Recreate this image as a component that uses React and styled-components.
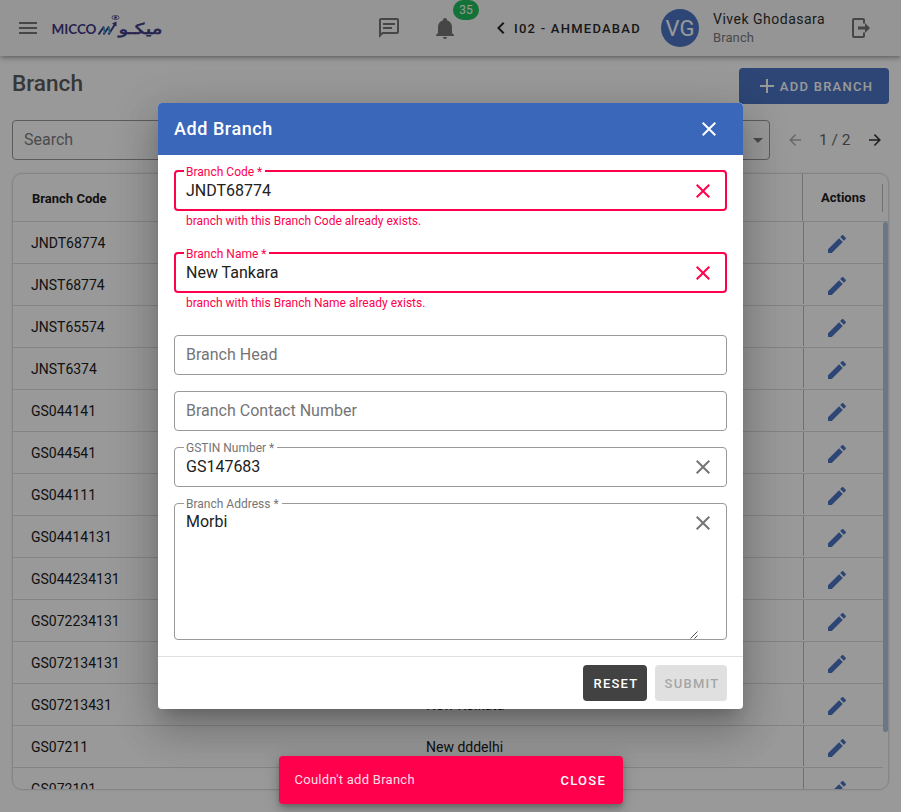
import React from "react";
import styled, { createGlobalStyle, css } from "styled-components";

const GlobalStyle = createGlobalStyle`
  *, *::before, *::after { box-sizing: border-box; }
  html, body { margin: 0; height: 100%; overflow: hidden; }
  body { font-family: Roboto, "Liberation Sans", sans-serif; color: #212121; background: #fff; }
  button { font-family: inherit; border: 0; padding: 0; background: none; color: inherit; }
`;

const PATHS = {
  menu: "M3,6H21V8H3V6M3,11H21V13H3V11M3,16H21V18H3V16Z",
  message:
    "M20,2A2,2 0 0,1 22,4V16A2,2 0 0,1 20,18H6L2,22V4C2,2.89 2.9,2 4,2H20M4,4V17.17L5.17,16H20V4H4M6,7H18V9H6V7M6,11H15V13H6V11Z",
  bell: "M21,19V20H3V19L5,17V11C5,7.9 7.03,5.17 10,4.29C10,4.19 10,4.1 10,4A2,2 0 0,1 12,2A2,2 0 0,1 14,4C14,4.1 14,4.19 14,4.29C16.97,5.17 19,7.9 19,11V17L21,19M14,21A2,2 0 0,1 12,23A2,2 0 0,1 10,21",
  chevronLeft: "M15.41,16.58L10.83,12L15.41,7.41L14,6L8,12L14,18L15.41,16.58Z",
  close:
    "M19,6.41L17.59,5L12,10.59L6.41,5L5,6.41L10.59,12L5,17.59L6.41,19L12,13.41L17.59,19L19,17.59L13.41,12L19,6.41Z",
  plus: "M19,13H13V19H11V13H5V11H11V5H13V11H19V13Z",
  arrowLeft: "M20,11V13H8L13.5,18.5L12.08,19.92L4.16,12L12.08,4.08L13.5,5.5L8,11H20Z",
  arrowRight: "M4,11V13H16L10.5,18.5L11.92,19.92L19.84,12L11.92,4.08L10.5,5.5L16,11H4Z",
  menuDown: "M7,10L12,15L17,10H7Z",
  pencil:
    "M20.71,7.04C21.1,6.65 21.1,6 20.71,5.63L18.37,3.29C18,2.9 17.35,2.9 16.96,3.29L15.12,5.12L18.87,8.87M3,17.25V21H6.75L17.81,9.93L14.06,6.18L3,17.25Z",
  logout:
    "M5,2H14A2,2 0 0,1 16,4V7.5H14V4H5V20H14V16.5H16V20A2,2 0 0,1 14,22H5A2,2 0 0,1 3,20V4A2,2 0 0,1 5,2M16,7L21,12L16,17V13.5H9V10.5H16V7Z",
};

const Svg = styled.svg`
  display: block;
  flex: none;
  width: ${(p) => p.$size}px;
  height: ${(p) => p.$size}px;
  fill: currentColor;
`;

const Icon = ({ name, size = 24 }) => (
  <Svg $size={size} viewBox="0 0 24 24" aria-hidden="true">
    <path d={PATHS[name]} />
  </Svg>
);

const Page = styled.div`
  position: relative;
  height: 812px;
  width: 901px;
  overflow: hidden;
  background: #fff;
`;

const AppBar = styled.header`
  position: relative;
  display: flex;
  align-items: center;
  height: 56px;
  padding-left: 16px;
  background: #f8f8f8;
  color: #757575;
  box-shadow: 0 2px 4px -1px rgba(0, 0, 0, 0.3), 0 4px 5px rgba(0, 0, 0, 0.08),
    0 1px 10px rgba(0, 0, 0, 0.06);
`;

const LogoSvg = styled.svg`
  width: 112px;
  height: 30px;
  margin-left: 12px;
`;

const BarActions = styled.div`
  display: flex;
  align-items: center;
  margin-left: 213px;
`;

const BellWrap = styled.div`
  position: relative;
  margin-left: 32px;
`;

const Badge = styled.span`
  position: absolute;
  left: 20px;
  top: -16px;
  width: 26px;
  height: 20px;
  border-radius: 10px;
  background: #1ebe5c;
  color: #fff;
  font-size: 12px;
  line-height: 20px;
  text-align: center;
`;

const BranchSwitch = styled.button`
  display: flex;
  align-items: center;
  margin-left: 32px;
  width: 152px;
  color: #292929;
  font-size: 13px;
  font-weight: 500;
  letter-spacing: 1.25px;
  white-space: nowrap;
`;

const SwitchLabel = styled.span`
  margin-left: 1px;
`;

const Avatar = styled.div`
  display: grid;
  place-items: center;
  width: 38px;
  height: 38px;
  margin-left: 20px;
  border-radius: 50%;
  background: #4d76c4;
  color: #fff;
  font-size: 22px;
`;

const UserText = styled.div`
  width: 122px;
  margin-left: 14px;
  color: #2f2f2f;
  font-size: 14px;
  line-height: 19px;
  letter-spacing: 0.5px;
`;

const UserRole = styled.div`
  color: #7a7a7a;
  font-size: 13px;
  line-height: 18px;
  letter-spacing: 0.1px;
`;

const LogoutWrap = styled.div`
  margin-left: 14px;
`;

const Content = styled.main`
  padding: 12px 13px 0 12px;
`;

const TitleRow = styled.div`
  display: flex;
  justify-content: space-between;
  height: 52px;
`;

const Title = styled.h1`
  margin: 0;
  color: #5c5c5c;
  font-size: 22.6px;
  font-weight: 500;
  line-height: 31px;
`;

const AddButton = styled.button`
  display: flex;
  align-items: center;
  justify-content: center;
  gap: 1px;
  width: 150px;
  height: 36px;
  margin-right: -1px;
  border-radius: 4px;
  background: #4d76c4;
  color: #fff;
  font-size: 13px;
  font-weight: 500;
  letter-spacing: 1.25px;
`;

const FilterRow = styled.div`
  display: flex;
  align-items: center;
  height: 40px;
`;

const FilterBox = styled.div`
  display: flex;
  align-items: center;
  justify-content: space-between;
  width: ${(p) => p.$width}px;
  height: 40px;
  padding: 0 0 1px 11px;
  margin-right: ${(p) => p.$gap}px;
  border: 1px solid #999;
  border-radius: 4px;
  color: #7e7e7e;
  font-size: 16px;
`;

const DropArrow = styled.span`
  margin-right: -1px;
`;

const Pager = styled.div`
  display: flex;
  align-items: center;
  gap: 15px;
  margin-left: 16px;
  color: #666;
  font-size: 15.5px;
`;

const PagerArrow = styled.span`
  color: ${(p) => (p.$off ? "#b0b0b0" : "#333")};
`;

const Table = styled.section`
  height: 617px;
  margin: 13px -1px 0 0;
  border: 1px solid #dedede;
  border-radius: 10px;
  overflow: hidden;
  box-shadow: 0 0 1px 1px rgba(0, 0, 0, 0.04);
`;

const HeadRow = styled.div`
  display: flex;
  height: 48px;
  border-bottom: 1px solid #ddd;
  font-size: 13px;
  font-weight: 700;
  line-height: 50px;
`;

const HeadCell = styled.div`
  flex: 1;
  padding-left: 19px;
`;

const HeadActions = styled.div`
  display: flex;
  align-items: center;
  justify-content: space-between;
  width: 86px;
  padding: 0 5px 0 18px;
  border-left: 1px solid #bcbcc2;
`;

const Tick = styled.span`
  width: 1px;
  height: 28px;
  margin-top: 1px;
  background: #bcbcc2;
`;

const Body = styled.div`
  display: flex;
  height: 568px;
  overflow: hidden;
`;

const Rows = styled.div`
  flex: 1;
`;

const Row = styled.div`
  display: flex;
  height: 42px;
  border-bottom: 1px solid #ddd;
  font-size: 14px;
  line-height: 42px;
`;

const CodeCell = styled.div`
  width: 395px;
  padding-left: 18px;
`;

const NameCell = styled.div`
  flex: 1;
  padding-left: 18px;
`;

const ActionCell = styled.div`
  display: flex;
  align-items: center;
  width: 80px;
  height: 40px;
  padding: 3px 0 0 21px;
  border-left: 1px solid #bcbcc2;
  color: #4d76c4;
`;

const ScrollThumb = styled.div`
  width: 5px;
  height: 510px;
  border-radius: 4px;
  background: #b0c6e2;
`;

const Scrim = styled.div`
  position: absolute;
  inset: 0;
  background: rgba(0, 0, 0, 0.4);
`;

const Dialog = styled.section`
  position: absolute;
  left: 158px;
  top: 103px;
  display: flex;
  flex-direction: column;
  width: 585px;
  height: 606px;
  border-radius: 4px;
  overflow: hidden;
  background: #fff;
`;

const DialogShadow = styled.div`
  position: absolute;
  left: 158px;
  top: 103px;
  width: 585px;
  height: 606px;
  border-radius: 4px;
  box-shadow: 0 11px 15px -7px rgba(0, 0, 0, 0.2), 0 24px 38px 3px rgba(0, 0, 0, 0.14),
    0 9px 46px 8px rgba(0, 0, 0, 0.12);
`;

const DialogHeader = styled.header`
  display: flex;
  align-items: center;
  justify-content: space-between;
  height: 52px;
  padding: 0 22px 0 16px;
  background: #3a67ba;
  color: #fff;
  font-size: 18px;
  font-weight: 500;
  letter-spacing: 0.55px;
`;

const DialogTitle = styled.span`
  margin-top: -2px;
`;

const DialogBody = styled.div`
  flex: 1;
  padding: 15px 16px 0;
`;

const FieldBox = styled.div`
  position: relative;
  display: flex;
  align-items: flex-start;
  justify-content: space-between;
  height: ${(p) => p.$height || 40}px;
  margin-bottom: 16px;
  padding: 0 11px;
  border: 1px solid #999;
  border-radius: 4px;
  color: #757575;
  font-size: 16px;
  line-height: 38px;
  ${(p) =>
    p.$error &&
    css`
      height: 41px;
      margin-bottom: 0;
      padding: 0 10px;
      border: 2px solid #ff004c;
      color: #ff004c;
      line-height: 37px;
    `}
`;

const FloatLabel = styled.label`
  position: absolute;
  left: ${(p) => (p.$error ? 8 : 9)}px;
  top: -8px;
  padding: 0 3px 0 2px;
  background: #fff;
  font-size: 12px;
  line-height: 16px;
`;

const Value = styled.span`
  color: #212121;
  line-height: ${(p) => (p.$multiline ? 36 : p.$error ? 37 : 38)}px;
`;

const ClearIcon = styled.span`
  margin-top: 7px;
`;

const Helper = styled.div`
  height: ${(p) => p.$height}px;
  padding: 1px 12px;
  color: #ff004c;
  font-size: 12px;
  line-height: 18px;
`;

const Grip = styled.svg`
  position: absolute;
  right: 28px;
  bottom: 0;
  width: 8px;
  height: 8px;
`;

const DialogFooter = styled.footer`
  display: flex;
  justify-content: flex-end;
  gap: 8px;
  height: 53px;
  padding: 8px 16px 0;
  border-top: 1px solid #e0e0e0;
`;

const FooterButton = styled.button`
  width: ${(p) => p.$width}px;
  height: 36px;
  padding-left: 2px;
  border-radius: 4px;
  background: ${(p) => (p.$disabled ? "#e0e0e0" : "#424242")};
  color: ${(p) => (p.$disabled ? "#a6a6a6" : "#fff")};
  font-size: 13px;
  font-weight: 500;
  letter-spacing: 1.25px;
`;

const Snackbar = styled.div`
  position: absolute;
  left: 279px;
  top: 756px;
  display: flex;
  align-items: center;
  justify-content: space-between;
  width: 344px;
  height: 48px;
  padding: 0 17px 0 15.5px;
  border-radius: 4px;
  background: #ff004c;
  color: rgba(255, 255, 255, 0.87);
  font-size: 13px;
  letter-spacing: 0.27px;
  box-shadow: 0 3px 5px -1px rgba(0, 0, 0, 0.2), 0 6px 10px rgba(0, 0, 0, 0.14),
    0 1px 18px rgba(0, 0, 0, 0.12);
`;

const SnackMessage = styled.span`
  margin-top: -2px;
`;

const SnackAction = styled.button`
  color: #fff;
  font-size: 13px;
  font-weight: 500;
  letter-spacing: 1.25px;
`;

const Logo = () => (
  <LogoSvg viewBox="0 0 112 30" aria-label="MICCO">
    <text x="-0.500" y="21.300" fontFamily="Lato, sans-serif" fontWeight="700" fontSize="13.5" fill="#413a86" textLength="45" lengthAdjust="spacingAndGlyphs">
      MICCO
    </text>
    <g fill="none" strokeWidth="2" strokeLinejoin="round">
      <path d="M46.500 21.500L52 13.500M51.500 21.500L57 13.500M56.500 21.500L63.500 10.500" stroke="#413a86" />
      <path d="M51.500 14L53 20.500M56.500 14L58 20.500" stroke="#35a3c8" strokeWidth="1.800" />
    </g>
    <path d="M60 10.500L64.500 8.500L64.500 13.500Z" fill="#413a86" />
    <ellipse cx="63.500" cy="4.500" rx="3.600" ry="2" fill="none" stroke="#6f6d9c" strokeWidth="1" />
    <circle cx="63.500" cy="4.500" r="1.300" fill="#413a86" />
    <text x="110.500" y="20.500" direction="rtl" fontFamily="DejaVu Sans, sans-serif" fontSize="15" fill="#413a86" stroke="#413a86" strokeWidth="0.600" textLength="44" lengthAdjust="spacingAndGlyphs">
      ميكـو
    </text>
  </LogoSvg>
);

const ROWS = [
  ["JNDT68774", "New Tankara"],
  ["JNST68774", ""],
  ["JNST65574", ""],
  ["JNST6374", ""],
  ["GS044141", ""],
  ["GS044541", ""],
  ["GS044111", ""],
  ["GS04414131", ""],
  ["GS044234131", ""],
  ["GS072234131", ""],
  ["GS072134131", ""],
  ["GS07213431", "New Kolkata"],
  ["GS07211", "New dddelhi"],
  ["GS072101", ""],
];

const Field = ({ label, value, error, helperHeight, height, multiline }) => (
  <>
    <FieldBox $error={!!error} $height={height}>
      {value ? <FloatLabel $error={!!error}>{label}</FloatLabel> : label}
      {value && <Value $error={!!error} $multiline={multiline}>{value}</Value>}
      {value && (
        <ClearIcon>
          <Icon name="close" />
        </ClearIcon>
      )}
      {multiline && (
        <Grip viewBox="0 0 8 8" stroke="#555" strokeWidth="1" fill="none">
          <path d="M0.500 7.500L7.500 0.500M4.500 7.500L7.500 4.500" />
        </Grip>
      )}
    </FieldBox>
    {error && <Helper $height={helperHeight}>{error}</Helper>}
  </>
);

export default function App() {
  return (
    <>
      <GlobalStyle />
      <Page>
        <AppBar>
          <Icon name="menu" />
          <Logo />
          <BarActions>
            <Icon name="message" />
            <BellWrap>
              <Icon name="bell" />
              <Badge>35</Badge>
            </BellWrap>
            <BranchSwitch>
              <Icon name="chevronLeft" />
              <SwitchLabel>I02 - AHMEDABAD</SwitchLabel>
            </BranchSwitch>
            <Avatar>VG</Avatar>
            <UserText>
              Vivek Ghodasara
              <UserRole>Branch</UserRole>
            </UserText>
            <LogoutWrap>
              <Icon name="logout" />
            </LogoutWrap>
          </BarActions>
        </AppBar>
        <Content>
          <TitleRow>
            <Title>Branch</Title>
            <AddButton>
              <Icon name="plus" />
              ADD BRANCH
            </AddButton>
          </TitleRow>
          <FilterRow>
            <FilterBox $width={370} $gap={18}>Search</FilterBox>
            <FilterBox $width={370} $gap={0}>
              <span />
              <DropArrow>
                <Icon name="menuDown" />
              </DropArrow>
            </FilterBox>
            <Pager>
              <PagerArrow $off>
                <Icon name="arrowLeft" size={18} />
              </PagerArrow>
              <span>1 / 2</span>
              <PagerArrow>
                <Icon name="arrowRight" size={18} />
              </PagerArrow>
            </Pager>
          </FilterRow>
          <Table>
            <HeadRow>
              <HeadCell>Branch Code</HeadCell>
              <HeadActions>
                Actions
                <Tick />
              </HeadActions>
            </HeadRow>
            <Body>
              <Rows>
                {ROWS.map(([code, name]) => (
                  <Row key={code}>
                    <CodeCell>{code}</CodeCell>
                    <NameCell>{name}</NameCell>
                    <ActionCell>
                      <Icon name="pencil" />
                    </ActionCell>
                  </Row>
                ))}
              </Rows>
              <ScrollThumb />
            </Body>
          </Table>
        </Content>
        <Scrim />
        <DialogShadow />
        <Dialog>
          <DialogHeader>
            <DialogTitle>Add Branch</DialogTitle>
            <Icon name="close" />
          </DialogHeader>
          <DialogBody>
            <Field label="Branch Code *" value="JNDT68774" error="branch with this Branch Code already exists." helperHeight={41} />
            <Field label="Branch Name *" value="New Tankara" error="branch with this Branch Name already exists." helperHeight={42} />
            <Field label="Branch Head" />
            <Field label="Branch Contact Number" />
            <Field label="GSTIN Number *" value="GS147683" />
            <Field label="Branch Address *" value="Morbi" height={137} multiline />
          </DialogBody>
          <DialogFooter>
            <FooterButton $width={64}>RESET</FooterButton>
            <FooterButton $width={72} $disabled>SUBMIT</FooterButton>
          </DialogFooter>
        </Dialog>
        <Snackbar>
          <SnackMessage>Couldn't add Branch</SnackMessage>
          <SnackAction>CLOSE</SnackAction>
        </Snackbar>
      </Page>
    </>
  );
}
